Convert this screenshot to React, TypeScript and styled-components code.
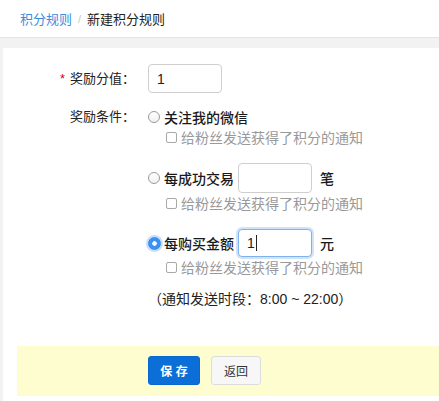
import React from "react";
import styled, { createGlobalStyle } from "styled-components";

const GlobalStyle = createGlobalStyle`
  html, body {
    margin: 0;
    padding: 0;
    background: #f2f2f2;
  }
  body {
    font-family: "Liberation Sans", "Noto Sans CJK SC", sans-serif;
    color: #333;
    width: 439px;
    height: 401px;
    overflow: hidden;
  }
`;

const Page = styled.div`
  display: flex;
  flex-direction: column;
  width: 439px;
  height: 401px;
  background: #f2f2f2;
`;

const Header = styled.div`
  height: 37px;
  display: flex;
  align-items: center;
  padding-left: 20px;
  background: #fff;
  border-bottom: 1px solid #e4e4e4;
  font-size: 13px;
`;

const Crumb = styled.span<{ $link?: boolean }>`
  color: ${(p) => (p.$link ? "#3a8ee0" : "#222")};
`;

const Slash = styled.span`
  color: #c8c8c8;
  font-size: 11px;
  margin: 0 6px;
`;

const Panel = styled.div`
  flex: 1;
  margin: 10px 0 0 3px;
  background: #fff;
  padding-top: 16px;
  display: flex;
  flex-direction: column;
`;

const Row = styled.div<{ $gap?: number }>`
  display: flex;
  align-items: flex-start;
  margin-bottom: ${(p) => p.$gap ?? 0}px;
`;

const Label = styled.div<{ $h: number }>`
  width: 132px;
  padding-right: 13px;
  text-align: right;
  font-size: 13px;
  line-height: ${(p) => p.$h}px;
  color: #222;
  flex-shrink: 0;
`;

const Star = styled.span`
  color: #d0021b;
  margin-right: 5px;
`;

const Content = styled.div`
  display: flex;
  flex-direction: column;
`;

const Option = styled.div<{ $h: number; $top?: number }>`
  display: flex;
  align-items: center;
  height: ${(p) => p.$h}px;
  margin-top: ${(p) => p.$top ?? 0}px;
  font-size: 14px;
  font-weight: 500;
  color: #1a1a1a;
`;

const Radio = styled.span<{ $on?: boolean }>`
  box-sizing: border-box;
  width: ${(p) => (p.$on ? 13 : 12)}px;
  height: ${(p) => (p.$on ? 13 : 12)}px;
  border-radius: 50%;
  margin-right: ${(p) => (p.$on ? 3 : 4)}px;
  border: 1px solid ${(p) => (p.$on ? "#2f86f0" : "#9a9a9a")};
  background: ${(p) =>
    p.$on ? "radial-gradient(circle, #fff 0 2px, #3b92f5 2.5px)" : "linear-gradient(#fff, #f1f1f1)"};
  box-shadow: ${(p) => (p.$on ? "0 0 0 2px rgba(90,160,240,0.35)" : "none")};
  flex-shrink: 0;
`;

const FakeInput = styled.div<{ $focus?: boolean; $h: number; $left?: number }>`
  box-sizing: border-box;
  width: 74px;
  height: ${(p) => p.$h}px;
  margin-left: ${(p) => p.$left ?? 0}px;
  border: 1px solid ${(p) => (p.$focus ? "#7fb2ea" : "#cfcfcf")};
  border-radius: 4px;
  box-shadow: ${(p) => (p.$focus ? "0 0 0 2px rgba(120,175,240,0.35)" : "none")};
  display: flex;
  align-items: center;
  padding-left: 8px;
  font-size: 14px;
  font-weight: 400;
  color: #222;
  background: #fff;
`;

const Caret = styled.span`
  display: inline-block;
  width: 1px;
  height: 16px;
  background: #222;
  margin-left: 1px;
`;

const Unit = styled.span`
  margin-left: 8px;
  font-size: 14px;
`;

const CheckLine = styled.div`
  display: flex;
  align-items: center;
  height: 20px;
  padding-left: 18px;
  font-size: 14px;
  color: #999;
`;

const Check = styled.span`
  box-sizing: border-box;
  width: 11px;
  height: 11px;
  border: 1px solid #a8a8a8;
  border-radius: 2px;
  margin-right: 4px;
  background: #fff;
  flex-shrink: 0;
`;

const Note = styled.div`
  margin: 12px 0 0 145px;
  font-size: 14px;
  line-height: 20px;
  color: #222;
`;

const ActionBar = styled.div`
  margin: 37px 0 0 14px;
  height: 50px;
  box-sizing: border-box;
  padding: 10px 0 0 131px;
  background: #fdfdd0;
  display: flex;
  gap: 11px;
`;

const Button = styled.button<{ $primary?: boolean }>`
  box-sizing: border-box;
  height: 29px;
  width: ${(p) => (p.$primary ? 52 : 50)}px;
  border-radius: 3px;
  border: 1px solid ${(p) => (p.$primary ? "#0a67cc" : "#dcdcdc")};
  background: ${(p) => (p.$primary ? "#0c6fd8" : "#f7f7f7")};
  color: ${(p) => (p.$primary ? "#fff" : "#333")};
  font-family: "Liberation Sans", "Noto Sans CJK SC", sans-serif;
  font-size: 12px;
  font-weight: ${(p) => (p.$primary ? 700 : 400)};
  padding: 0;
  cursor: pointer;
`;

const Notify = () => (
  <CheckLine>
    <Check />
    给粉丝发送获得了积分的通知
  </CheckLine>
);

export default function App() {
  return (
    <Page>
      <GlobalStyle />
      <Header>
        <Crumb $link>积分规则</Crumb>
        <Slash>/</Slash>
        <Crumb>新建积分规则</Crumb>
      </Header>
      <Panel>
        <Row $gap={14}>
          <Label $h={29}>
            <Star>*</Star>奖励分值：
          </Label>
          <FakeInput $h={29}>1</FakeInput>
        </Row>
        <Row>
          <Label $h={20}>奖励条件：</Label>
          <Content>
            <Option $h={20}>
              <Radio />
              关注我的微信
            </Option>
            <Notify />
            <Option $h={30} $top={16}>
              <Radio />
              每成功交易
              <FakeInput $h={30} $left={4} />
              <Unit>笔</Unit>
            </Option>
            <Notify />
            <Option $h={28} $top={16}>
              <Radio $on />
              每购买金额
              <FakeInput $h={28} $left={4} $focus>
                1<Caret />
              </FakeInput>
              <Unit>元</Unit>
            </Option>
            <Notify />
          </Content>
        </Row>
        <Note>（通知发送时段：8:00 ~ 22:00）</Note>
        <ActionBar>
          <Button $primary>保 存</Button>
          <Button>返回</Button>
        </ActionBar>
      </Panel>
    </Page>
  );
}
